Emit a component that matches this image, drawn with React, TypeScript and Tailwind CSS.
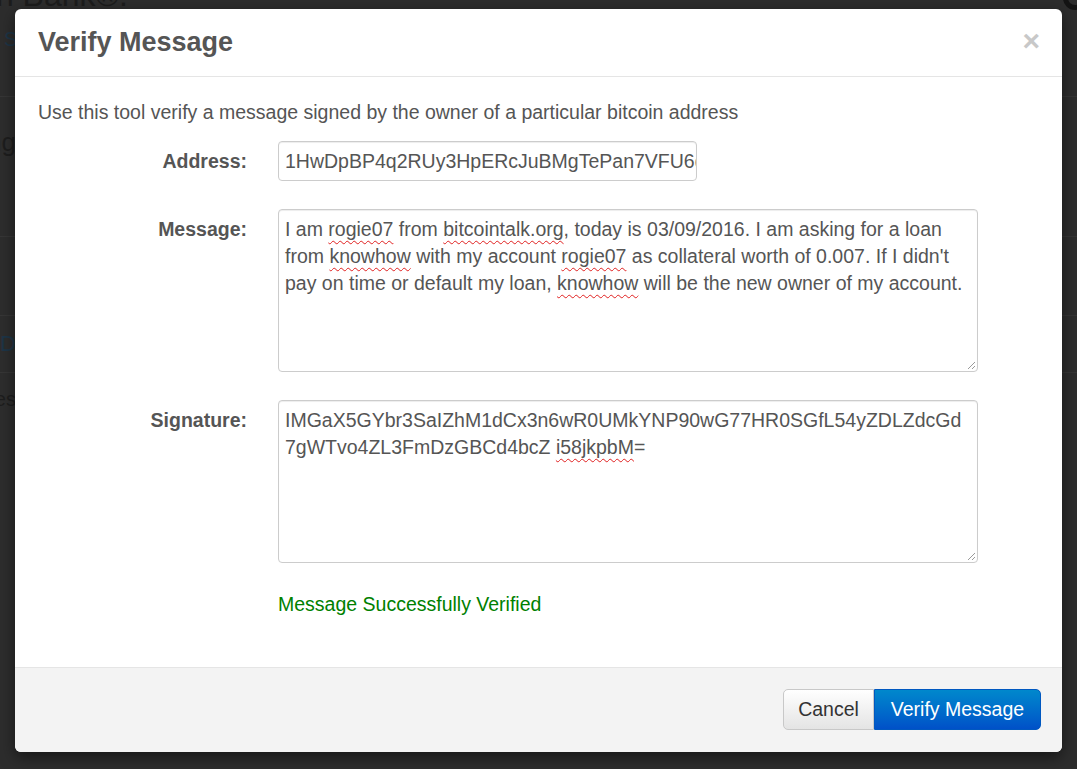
import React from "react";

const squiggle = "underline decoration-wavy decoration-[#e02020] decoration-1 underline-offset-[4px]";

function ResizeGrip() {
  return (
    <svg width="10" height="10" viewBox="0 0 10 10" className="absolute right-[1px] bottom-[1px]">
      <path d="M9 2L2 9M9 6L6 9" stroke="#9a9a9a" strokeWidth="1" />
    </svg>
  );
}

function FakeTextarea({ lines }: { lines: React.ReactNode[] }) {
  return (
    <div className="relative w-[700px] h-[163px] rounded-[4px] border border-[#cccccc] bg-white px-[6px] pt-[6px] shadow-[inset_0_1px_1px_rgba(0,0,0,0.075)]">
      {lines.map((l, i) => (
        <div key={i} className="whitespace-nowrap leading-[27px]">
          {l}
        </div>
      ))}
      <ResizeGrip />
    </div>
  );
}

function Row({ label, children }: { label: string; children: React.ReactNode }) {
  return (
    <div className="flex items-start">
      <div className="w-[209px] pt-[7px] text-right font-bold leading-[27px]">{label}</div>
      <div className="ml-[31px]">{children}</div>
    </div>
  );
}

// text peeking out from behind the backdrop, right edge tucked under the modal
function Peek({ text, className }: { text: string; className: string }) {
  return (
    <div className="flex w-[16px] justify-end">
      <span className={"whitespace-nowrap " + className}>{text}</span>
    </div>
  );
}

export default function App() {
  return (
    <div
      className="relative h-[769px] w-full overflow-hidden bg-[#2d2d2d] text-[#555555]"
      style={{ fontFamily: '"Liberation Sans", Arial, sans-serif' }}
    >
      {/* page behind the backdrop */}
      <div className="flex flex-col">
        <div className="h-[97px] border-b border-[#363636]">
          <div className="flex w-[128px] justify-end -mt-[23px]">
            <span className="whitespace-nowrap text-[32px] leading-[36px] text-[#1c1c1c]">Crown Bank®.</span>
          </div>
          <div className="mt-[14px] ml-[4px] text-[20px] leading-[24px] text-[#1d3547]">Settings</div>
        </div>
        <div className="h-[140px] border-b border-[#363636] pt-[30px]">
          <Peek text="Borrowing" className="text-[26px] leading-[30px] text-[#1d1d1d]" />
        </div>
        <div className="h-[79px] border-b border-[#363636]" />
        <div className="h-[57px] border-b border-[#363636] pt-[15px]">
          <Peek text="CARD" className="text-[22px] leading-[26px] text-[#1d3547]" />
        </div>
        <div className="pt-[14px]">
          <Peek text="Services" className="text-[20px] leading-[24px] text-[#1d1d1d]" />
        </div>
      </div>
      <div className="absolute right-[-10px] top-[-14px] h-[24px] w-[24px] rounded-full border-[5px] border-[#141414]" />

      {/* modal */}
      <div className="absolute left-[15px] top-[9px] flex w-[1047px] flex-col overflow-hidden rounded-[6px] bg-white shadow-[0_5px_15px_rgba(0,0,0,0.5)] text-[19.5px]">
        <div className="flex h-[68px] items-center justify-between border-b border-[#e5e5e5] pl-[23px] pr-[22px]">
          <h4 className="text-[27px] font-bold text-[#555555]">Verify Message</h4>
          <span className="mt-[-4px] text-[30px] font-bold leading-none text-[#c8c8c8]">×</span>
        </div>

        <div className="flex flex-col pl-[23px] pt-[22px] pb-[49px]">
          <p className="leading-[27px]">Use this tool verify a message signed by the owner of a particular bitcoin address</p>

          <div className="mt-[15px] flex flex-col gap-[28px]">
            <Row label="Address:">
              <div className="h-[40px] w-[419px] overflow-hidden whitespace-nowrap rounded-[4px] border border-[#cccccc] px-[6px] pt-[6px] leading-[27px] shadow-[inset_0_1px_1px_rgba(0,0,0,0.075)]">
                1HwDpBP4q2RUy3HpERcJuBMgTePan7VFU6qLsD
              </div>
            </Row>
            <Row label="Message:">
              <FakeTextarea
                lines={[
                  <>
                    I am <span className={squiggle}>rogie07</span> from <span className={squiggle}>bitcointalk.org</span>, today is 03/09/2016. I am asking for a loan
                  </>,
                  <>
                    from <span className={squiggle}>knowhow</span> with my account <span className={squiggle}>rogie07</span> as collateral worth of 0.007. If I didn't
                  </>,
                  <>
                    pay on time or default my loan, <span className={squiggle}>knowhow</span> will be the new owner of my account.
                  </>,
                ]}
              />
            </Row>
            <Row label="Signature:">
              <FakeTextarea
                lines={[
                  <>IMGaX5GYbr3SaIZhM1dCx3n6wR0UMkYNP90wG77HR0SGfL54yZDLZdcGd</>,
                  <>
                    7gWTvo4ZL3FmDzGBCd4bcZ <span className={squiggle}>i58jkpbM</span>=
                  </>,
                ]}
              />
            </Row>
          </div>

          <p className="mt-[28px] ml-[240px] leading-[27px] text-[#008000]">Message Successfully Verified</p>
        </div>

        <div className="flex h-[85px] items-start justify-end border-t border-[#e5e5e5] bg-[#f3f3f3] pr-[21px] pt-[21px]">
          <button className="h-[41px] w-[91px] rounded-l-[5px] border border-[#c8c8c8] bg-gradient-to-b from-white to-[#e4e4e4] text-[19.5px] text-[#333333]">
            Cancel
          </button>
          <button className="h-[41px] w-[167px] rounded-r-[5px] border border-[#0058c0] bg-gradient-to-b from-[#0088cc] to-[#0050c8] text-[19.5px] text-white">
            Verify Message
          </button>
        </div>
      </div>
    </div>
  );
}
